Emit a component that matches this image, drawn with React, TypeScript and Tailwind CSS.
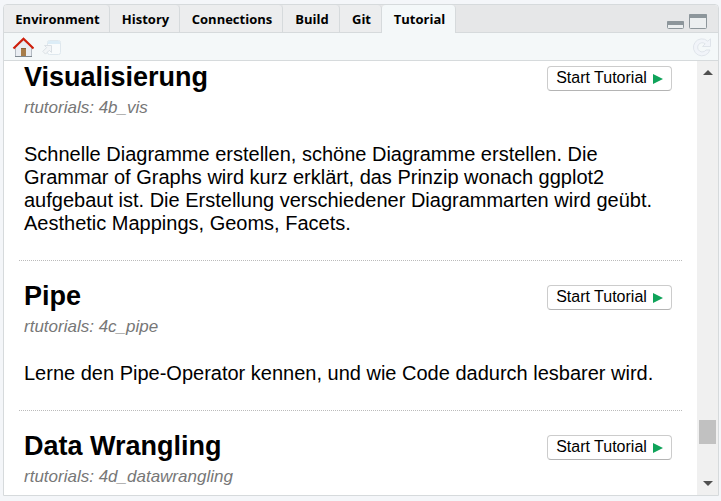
const tabs = [
  { name: "Environment", width: "w-[106px]" },
  { name: "History", width: "w-[70px]" },
  { name: "Connections", width: "w-[103px]" },
  { name: "Build", width: "w-[57px]" },
  { name: "Git", width: "w-[42px]" },
];

const tutorials = [
  {
    title: "Visualisierung",
    source: "rtutorials: 4b_vis",
    text: "Schnelle Diagramme erstellen, schöne Diagramme erstellen. Die Grammar of Graphs wird kurz erklärt, das Prinzip wonach ggplot2 aufgebaut ist. Die Erstellung verschiedener Diagrammarten wird geübt. Aesthetic Mappings, Geoms, Facets.",
  },
  {
    title: "Pipe",
    source: "rtutorials: 4c_pipe",
    text: "Lerne den Pipe-Operator kennen, und wie Code dadurch lesbarer wird.",
  },
  { title: "Data Wrangling", source: "rtutorials: 4d_datawrangling", text: "" },
];

function HomeIcon() {
  return (
    <svg className="block" width="22" height="22" viewBox="0 0 22 22">
      <path d="M3.5 11 L11.500 4 L19.500 11 V20.500 H3.5 Z" fill="#e9edf2" stroke="#b3bac2" />
      <path d="M3 20.500 H20" stroke="#7e8890" />
      <rect x="9" y="12" width="5" height="8" fill="#a67c4a" />
      <path d="M9 12.500 H14" stroke="#8a6238" />
      <path d="M1.500 12.500 L11.500 2.800 L21.500 12.500" fill="none" stroke="#cf200c" strokeWidth="2.2" />
    </svg>
  );
}

function PopOutIcon() {
  return (
    <svg className="block" width="20" height="16" viewBox="0 0 20 16">
      <rect x="5.5" y=".5" width="13" height="14" rx="2" fill="#f8fbfc" stroke="#dfe8ee" />
      <path d="M6 4 V2.500 Q6 1 7.500 1 H16.500 Q18 1 18 2.500 V4 Z" fill="#dcedf7" />
      <path d="M2.500 5.500 H9.500 V12.500 L7.300 10.300 L3.500 14.100 L.8 11.400 L4.600 7.600 Z" fill="#f2f5f7" stroke="#dae0e5" />
    </svg>
  );
}

function RefreshIcon() {
  return (
    <svg className="block" width="20" height="20" viewBox="0 0 20 20">
      <path
        d="M15.800 4.200 L18.500 1.800 V9.500 H10.500 L13.200 6.800 A4.600 4.600 0 1 0 14 13 H18 A8.500 8.500 0 1 1 15.800 4.200 Z"
        fill="#f1f4f9"
        stroke="#dfe4ea"
        strokeLinejoin="round"
      />
    </svg>
  );
}

export default function App() {
  return (
    <main className="h-screen overflow-hidden bg-[#f4f6f9] pt-1 pr-0.5 pb-[5px] pl-[3px] font-['Liberation_Sans',Arial,sans-serif] text-black">
      <section className="flex h-full flex-col overflow-hidden rounded-t border border-[#d6dadc] bg-white">
        <header className="flex h-7 shrink-0 bg-[#e6e7e8]">
          <nav className="flex font-['Open_Sans','Segoe_UI',sans-serif] text-[13px] leading-[25px] font-bold">
            {tabs.map((tab) => (
              <button
                key={tab.name}
                className={`${tab.width} shrink-0 rounded-tr-sm border-r border-b border-[#d6dadc] bg-[#ecedee] pt-0.5 pl-0.5 text-center whitespace-nowrap`}
              >
                {tab.name}
              </button>
            ))}
            <button className="w-[74px] shrink-0 rounded-t border-r border-[#d6dadc] bg-[#f4f8f9] pt-px pb-px pl-0.5 text-center">
              Tutorial
            </button>
          </nav>
          <div className="flex grow items-end justify-end gap-[5px] border-b border-[#d6dadc] pr-[11px] pb-[3px]">
            <button aria-label="Minimize">
              <svg className="block" width="17" height="8" viewBox="0 0 17 8">
                <rect x=".5" y=".5" width="16" height="7" rx="1" fill="#eceff0" stroke="#8d969b" />
                <rect x="0" y="0" width="17" height="4" rx="1" fill="#8d969b" />
              </svg>
            </button>
            <button aria-label="Maximize">
              <svg className="block" width="18" height="15" viewBox="0 0 18 15">
                <rect x=".5" y=".5" width="17" height="14" rx="1" fill="#eceff0" stroke="#8d969b" />
                <rect x="0" y="0" width="18" height="4" rx="1" fill="#8d969b" />
              </svg>
            </button>
          </div>
        </header>
        <div className="flex h-7 shrink-0 items-center border-b border-[#d6dadc] bg-[#f4f8f9] pr-1.5 pl-2">
          <button aria-label="Home"><HomeIcon /></button>
          <button aria-label="Open in new window" className="ml-2 pt-0.5"><PopOutIcon /></button>
          <button aria-label="Refresh" className="ml-auto"><RefreshIcon /></button>
        </div>
        <div className="flex min-h-0 grow">
          <div className="min-w-0 grow overflow-hidden px-[15px] pt-px">
            {tutorials.map((t) => (
              <article
                key={t.title}
                className="mb-5 border-b border-dotted border-[#bbbbbb] pr-2.5 pb-[25px] pl-[5px]"
              >
                <div className="flex items-start justify-between">
                  <h2 className="text-[27px] leading-[30px] font-bold">{t.title}</h2>
                  <button className="mt-1 flex h-[25px] w-[125px] items-center justify-center gap-1.5 rounded border border-[#cccccc] border-b-[#b4b4b4] bg-white pb-0.5 text-base leading-5 whitespace-nowrap">
                    Start Tutorial
                    <svg className="mt-0.5" width="10" height="10" viewBox="0 0 10 10">
                      <path d="M0 0 L10 5 L0 10 Z" fill="#0fa35a" />
                    </svg>
                  </button>
                </div>
                <p className="mt-1.5 text-[17px] leading-5 text-[#777777] italic">{t.source}</p>
                <p className="mt-[25px] text-[20px] leading-[23px]">{t.text}</p>
              </article>
            ))}
          </div>
          <div className="flex w-[21px] shrink-0 flex-col items-center bg-[#f0f0f0] pt-[9px] pb-[9px]">
            <svg width="10" height="5" viewBox="0 0 10 5"><path d="M0 5 L5 0 L10 5 Z" fill="#505050" /></svg>
            <div className="grow" />
            <div className="mb-[37px] h-6 w-[17px] bg-[#c1c1c1]" />
            <svg width="10" height="5" viewBox="0 0 10 5"><path d="M0 0 L5 5 L10 0 Z" fill="#505050" /></svg>
          </div>
        </div>
      </section>
    </main>
  );
}
